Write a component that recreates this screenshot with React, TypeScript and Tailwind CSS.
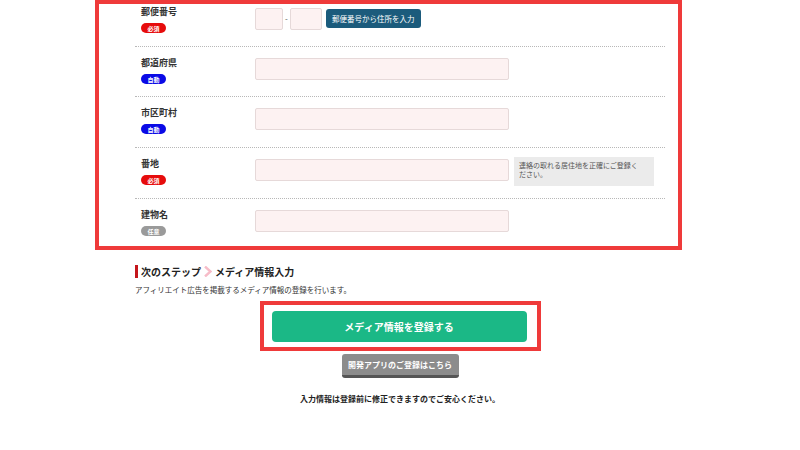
import type { ReactNode } from 'react';

type Badge = 'req' | 'auto' | 'opt';

const badgeStyles: Record<Badge, { label: string; cls: string }> = {
  req: { label: '必須', cls: 'bg-[#e60c0c]' },
  auto: { label: '自動', cls: 'bg-[#0a0ae6]' },
  opt: { label: '任意', cls: 'bg-[#9a9a9a]' },
};

function Row({
  label,
  badge,
  pad,
  first,
  children,
}: {
  label: string;
  badge: Badge;
  pad: string;
  first?: boolean;
  children: ReactNode;
}) {
  const b = badgeStyles[badge];
  return (
    <div className={`flex items-start ${first ? 'pt-[2px]' : 'pt-[10px]'} ${pad}`}>
      <div className="w-[120px] pl-[6px] flex flex-col items-start">
        <span className="text-[9px] leading-[12px] font-bold text-[#333]">{label}</span>
        <span
          className={`mt-[5px] w-[25px] h-[10px] rounded-full flex items-center justify-center text-[6px] font-bold text-white ${b.cls}`}
        >
          {b.label}
        </span>
      </div>
      <div className={`flex-1 flex items-start ${first ? 'pt-[2px]' : 'pt-[1px]'}`}>{children}</div>
    </div>
  );
}

function Input({ w }: { w: string }) {
  return <div className={`${w} h-[22px] bg-[#fdf2f2] border border-[#e6d9d9] rounded-[2px]`} />;
}

const sep = 'border-b border-dotted border-[#b8b8b8]';

export default function App() {
  return (
    <div
      className="w-[800px] h-[450px] bg-white overflow-hidden"
      style={{ fontFamily: '"Noto Sans CJK JP", "Noto Sans", sans-serif' }}
    >
      <div className="ml-[95px] w-[587px] border-4 border-[#ef3a3a] pl-[36px] pr-[12px] bg-white">
        <div className="w-[530px] flex flex-col">
          <Row label="郵便番号" badge="req" first pad={`pb-[13px] ${sep}`}>
            <Input w="w-[28px]" />
            <span className="mx-[2px] mt-[5px] text-[8px] text-[#555]">-</span>
            <Input w="w-[32px]" />
            <button className="ml-[4px] mt-[1px] w-[95px] h-[19px] rounded-[3px] bg-[#1b5b7c] text-white text-[7.5px] leading-none whitespace-nowrap">
              郵便番号から住所を入力
            </button>
          </Row>
          <Row label="都道府県" badge="auto" pad={`pb-[12px] ${sep}`}>
            <Input w="w-[254px]" />
          </Row>
          <Row label="市区町村" badge="auto" pad={`pb-[13px] ${sep}`}>
            <Input w="w-[254px]" />
          </Row>
          <Row label="番地" badge="req" pad={`pb-[12px] ${sep}`}>
            <Input w="w-[254px]" />
            <div className="ml-[5px] -mt-[2px] w-[140px] h-[29px] bg-[#ebebeb] pl-[5px] pr-[10px] pt-[4px] text-[7px] leading-[9px] text-[#555]">
              連絡の取れる居住地を正確にご登録ください。
            </div>
          </Row>
          <Row label="建物名" badge="opt" pad="pb-[10px]">
            <Input w="w-[254px]" />
          </Row>
        </div>
      </div>

      <div className="ml-[135px] mt-[15px] w-[530px]">
        <div className="flex items-center h-[12px]">
          <span className="w-[3px] h-[13px] bg-[#c4161c]" />
          <span className="ml-[3px] text-[10px] font-bold text-[#222]">次のステップ</span>
          <svg className="mx-[3px]" width="8" height="11" viewBox="0 0 8 11">
            <path d="M1 0.5 L6.5 5.5 L1 10.5" fill="none" stroke="#f7bcc8" strokeWidth="2.4" />
          </svg>
          <span className="text-[10px] font-bold text-[#222]">メディア情報入力</span>
        </div>
        <p className="mt-[7px] text-[7.5px] text-[#333]">アフィリエイト広告を掲載するメディア情報の登録を行います。</p>
      </div>

      <div className="flex flex-col items-center mt-[6px]">
        <div className="border-4 border-[#ef3a3a] pl-[8px] pr-[10px] pt-[6px] pb-[5px]">
          <button className="w-[255px] h-[31px] rounded-[4px] bg-[#1bb886] text-white text-[10px] font-bold">
            メディア情報を登録する
          </button>
        </div>
        <button className="mt-[3px] w-[117px] h-[24px] rounded-[3px] bg-[#8c8c8c] border-b-[3px] border-[#555] text-white text-[8px] font-bold">
          開発アプリのご登録はこちら
        </button>
        <p className="mt-[15px] text-[8px] font-bold text-[#222]">入力情報は登録前に修正できますのでご安心ください。</p>
      </div>
    </div>
  );
}
